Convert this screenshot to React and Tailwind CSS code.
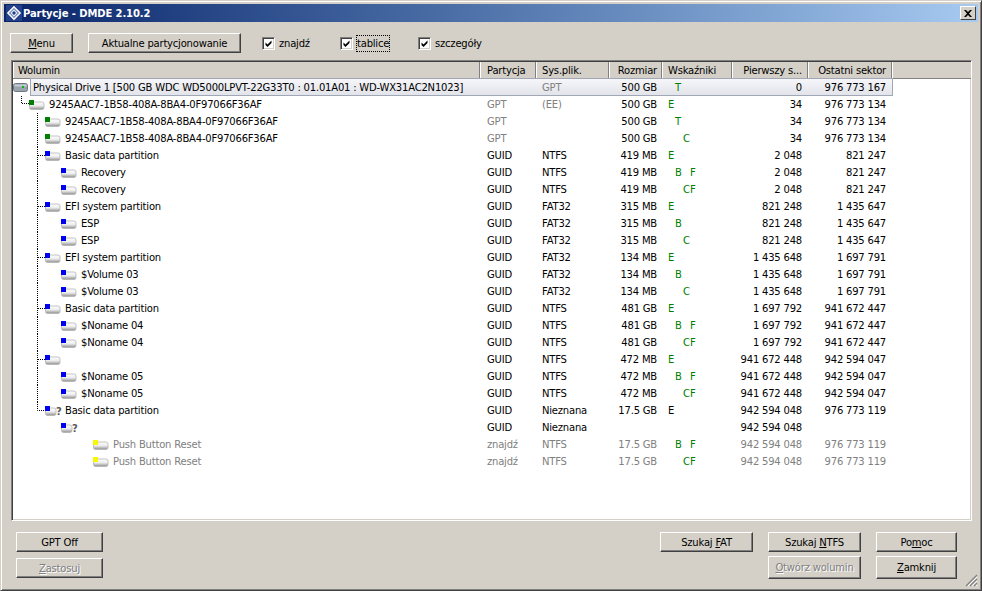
import React from "react";

const rows = [
  { d: 0, name: "Physical Drive 1 [500 GB WDC WD5000LPVT-22G33T0 : 01.01A01 : WD-WX31AC2N1023]", p: "", fs: "GPT", size: "500 GB", f: " T", a: "0", b: "976 773 167", c: "drive", sel: true, fsGray: true },
  { d: 1, name: "9245AAC7-1B58-408A-8BA4-0F97066F36AF", p: "GPT", fs: "(EE)", size: "500 GB", f: "E", a: "34", b: "976 773 134", c: "#008000", gray: true, conn: "top" },
  { d: 2, name: "9245AAC7-1B58-408A-8BA4-0F97066F36AF", p: "GPT", fs: "", size: "500 GB", f: " T", a: "34", b: "976 773 134", c: "#008000", gray: true, v: true },
  { d: 2, name: "9245AAC7-1B58-408A-8BA4-0F97066F36AF", p: "GPT", fs: "", size: "500 GB", f: "  C", a: "34", b: "976 773 134", c: "#008000", gray: true, v: true },
];
function group(name, fs, size, a, b, sub1, sub2, f1, f2) {
  return [
    { d: 2, name, p: "GUID", fs, size, f: "E", a, b, c: "#0000f0", conn: "mid" },
    { d: 3, name: sub1, p: "GUID", fs, size, f: f1, a, b, c: "#0000f0", v: true },
    { d: 3, name: sub2, p: "GUID", fs, size, f: f2, a, b, c: "#0000f0", v: true },
  ];
}
rows.push(...group("Basic data partition", "NTFS", "419 MB", "2 048", "821 247", "Recovery", "Recovery", " B F", "  CF"));
rows.push(...group("EFI system partition", "FAT32", "315 MB", "821 248", "1 435 647", "ESP", "ESP", " B", "  C"));
rows.push(...group("EFI system partition", "FAT32", "134 MB", "1 435 648", "1 697 791", "$Volume 03", "$Volume 03", " B", "  C"));
rows.push(...group("Basic data partition", "NTFS", "481 GB", "1 697 792", "941 672 447", "$Noname 04", "$Noname 04", " B F", "  CF"));
rows.push(...group("", "NTFS", "472 MB", "941 672 448", "942 594 047", "$Noname 05", "$Noname 05", " B F", "  CF"));
rows.push(
  { d: 2, name: "Basic data partition", p: "GUID", fs: "Nieznana", size: "17.5 GB", f: "E", fBlack: true, a: "942 594 048", b: "976 773 119", c: "#0000f0", conn: "end", q: true },
  { d: 3, name: "", p: "GUID", fs: "Nieznana", size: "", f: "", a: "942 594 048", b: "", c: "#0000f0", q: true },
  { d: 5, name: "Push Button Reset", p: "znajdź", fs: "NTFS", size: "17.5 GB", f: " B F", a: "942 594 048", b: "976 773 119", c: "#f8f800", dim: true },
  { d: 5, name: "Push Button Reset", p: "znajdź", fs: "NTFS", size: "17.5 GB", f: "  CF", a: "942 594 048", b: "976 773 119", c: "#f8f800", dim: true }
);

function DiskIcon({ color, q, id }) {
  return (
    <svg width="22" height="12" viewBox="0 0 22 12" className="shrink-0">
      <defs>
        <linearGradient id={id} x1="0" y1="0" x2="0" y2="1">
          <stop offset="0" stopColor="#ffffff" />
          <stop offset="0.5" stopColor="#ececec" />
          <stop offset="1" stopColor="#8e8e8e" />
        </linearGradient>
      </defs>
      <rect x="0.5" y="3" width={q ? 10.5 : 14.5} height="7.5" rx="2" fill={`url(#${id})`} stroke="#b4b4b4" strokeWidth="0.8" />
      <rect x="0" y="1" width="5" height="5" fill={color} />
      {q && <text x="11" y="10" fontSize="10" fontWeight="700" fill="#5a5a5a" fontFamily="DejaVu Sans">?</text>}
    </svg>
  );
}

function DriveIcon() {
  return (
    <svg width="16" height="9" viewBox="0 0 16 9" className="shrink-0">
      <rect x="0.5" y="0.5" width="14" height="8" rx="2" fill="#9aa4ae" stroke="#6f7780" />
      <rect x="1.5" y="1.5" width="12" height="2" fill="#c4ccd4" />
      <rect x="9" y="3" width="2" height="2" fill="#12b012" />
    </svg>
  );
}

function Connector({ kind }) {
  const paths = {
    top: "M8.5 0V7.5H16",
    mid: "M24.5 0V17M25 8.5H32",
    end: "M24.5 0V8.5H32",
    v: "M24.5 0V17",
  };
  return (
    <svg width="40" height="17" className="absolute left-0 top-0">
      <path d={paths[kind]} stroke="#000" strokeDasharray="1 1" fill="none" />
    </svg>
  );
}

function Flags({ f, black }) {
  const has = (ch) => f.includes(ch);
  return (
    <div className={`w-[70px] pl-[5px] flex ${black ? "text-black" : "text-[#008000]"}`}>
      <span className="w-[7px]">{has("E") ? "E" : ""}</span>
      <span className="w-[8px]">{has("T") ? "T" : has("B") ? "B" : ""}</span>
      <span className="w-[7px]">{has("C") ? "C" : ""}</span>
      <span className="w-[7px]">{has("F") ? "F" : ""}</span>
    </div>
  );
}

function Row({ r, i }) {
  const muted = r.gray || r.dim;
  const pCol = muted ? "text-[#808080]" : "text-black";
  const dataCol = r.dim ? "text-[#808080]" : "text-black";
  const fsCol = r.gray || r.dim || r.fsGray ? "text-[#808080]" : "text-black";
  const indent = { 0: 0, 1: 16, 2: 32, 3: 48, 5: 80 }[r.d];
  return (
    <div className="flex h-[17px] items-center leading-[17px] relative">
      {r.sel && (
        <div className="absolute left-[17px] w-[863px] top-[-1px] h-[18px] border border-[#a0a8b8] bg-gradient-to-b from-[#f6f6fa] to-[#e2e4ea]" />
      )}
      <div className="relative w-[468px] h-[17px] flex items-center whitespace-nowrap" style={{ paddingLeft: indent }}>
        {r.conn && <Connector kind={r.conn} />}
        {r.v && <Connector kind="v" />}
        {r.c === "drive" ? (
          <>
            <DriveIcon />
            <span className="relative ml-[4px] text-black">{r.name}</span>
          </>
        ) : (
          <>
            <DiskIcon color={r.c} q={r.q} id={`g${i}`} />
            <span className={`ml-[-2px] ${r.dim ? "text-[#808080]" : "text-black"}`}>{r.name}</span>
          </>
        )}
      </div>
      <div className={`relative w-[56px] pl-[6px] ${pCol}`}>{r.p}</div>
      <div className={`relative w-[73px] pl-[5px] ${fsCol}`}>{r.fs}</div>
      <div className={`relative w-[53px] pr-[6px] text-right ${dataCol}`}>{r.size}</div>
      <div className="relative"><Flags f={r.f} black={r.fBlack} /></div>
      <div className={`relative w-[76px] pr-[7px] text-right ${dataCol}`}>{r.a}</div>
      <div className={`relative w-[84px] pr-[7px] text-right ${dataCol}`}>{r.b}</div>
    </div>
  );
}

function Btn({ children, disabled, className = "" }) {
  return (
    <button
      className={`h-full flex items-center justify-center bg-[#d4d0c8] border border-t-white border-l-white border-r-[#404040] border-b-[#404040] shadow-[inset_-1px_-1px_0_#808080] ${disabled ? "text-[#808080] [text-shadow:1px_1px_0_#fff]" : "text-black"} ${className}`}
    >
      {children}
    </button>
  );
}

function Check({ label, focus, className = "" }) {
  return (
    <label className={`flex items-center gap-[4px] ${className}`}>
      <span className="w-[13px] h-[13px] bg-white border border-t-[#808080] border-l-[#808080] border-r-white border-b-white shadow-[inset_1px_1px_0_#404040,inset_-1px_-1px_0_#d4d0c8] flex items-center justify-center">
        <svg width="9" height="9" viewBox="0 0 9 9"><path d="M1.5 3.5L3.5 5.5L7.5 1.5V4L3.5 8L1.5 6z" fill="#000" /></svg>
      </span>
      <span className={focus ? "outline-1 outline-dotted outline-black" : ""}>{label}</span>
    </label>
  );
}

function Head({ w, right, children, pad }) {
  return (
    <div
      className={`h-[16px] shrink-0 flex items-center border-r border-r-[#808080] border-l border-l-white ${right ? "justify-end" : ""}`}
      style={{ width: w, paddingLeft: right ? 0 : pad, paddingRight: right ? pad : 0 }}
    >
      {children}
    </div>
  );
}

export default function App() {
  return (
    <div className="w-[982px] h-[591px] bg-[#d4d0c8] flex flex-col text-[10px] tracking-[-0.2px] overflow-hidden [font-family:'DejaVu_Sans',sans-serif] border-t border-l border-t-[#d4d0c8] border-l-[#d4d0c8] border-r border-b border-r-[#404040] border-b-[#404040] shadow-[inset_1px_1px_0_#fff,inset_-1px_-1px_0_#808080] p-[3px] relative">
      <div className="h-[18px] flex items-center justify-between pl-[2px] pr-[2px] bg-gradient-to-r from-[#0a246a] to-[#a6caf0] shrink-0">
        <div className="flex items-center gap-[1px]">
          <svg width="16" height="16" viewBox="0 0 16 16">
            <rect x="0" y="0" width="16" height="16" fill="#24408a" />
            <path d="M8 2L14 8 8 14 2 8z" fill="none" stroke="#fff" strokeWidth="1.6" />
            <path d="M8 5L11 8 8 11 5 8z" fill="none" stroke="#dfe6f5" strokeWidth="1.4" />
          </svg>
          <span className="text-white font-bold text-[10px] tracking-[-0.1px]">Partycje - DMDE 2.10.2</span>
        </div>
        <button className="w-[16px] h-[14px] flex items-center justify-center bg-[#d4d0c8] border border-t-white border-l-white border-r-[#404040] border-b-[#404040]">
          <svg width="8" height="7" viewBox="0 0 8 7"><path d="M0 0l2 0 2 2 2-2 2 0-3 3.5 3 3.5-2 0-2-2-2 2-2 0 3-3.5z" fill="#000" /></svg>
        </button>
      </div>

      <div className="h-[20px] mt-[11px] ml-[6px] flex items-center shrink-0">
        <Btn className="w-[63px]"><span><u>M</u>enu</span></Btn>
        <Btn className="w-[153px] ml-[15px]">Aktualne partycjonowanie</Btn>
        <Check label="znajdź" className="ml-[21px] w-[78px]" />
        <Check label="tablice" focus className="w-[78px]" />
        <Check label="szczegóły" />
      </div>

      <div className="mt-[7px] ml-[7px] w-[961px] h-[461px] bg-white border border-t-[#808080] border-l-[#808080] border-r-white border-b-white shadow-[inset_1px_1px_0_#404040,inset_-1px_-1px_0_#d4d0c8] pt-[1px] pl-[1px] shrink-0 overflow-hidden">
        <div className="flex h-[16px] bg-[#d4d0c8] border-b border-b-[#808080] box-content">
          <Head w={467} pad={4}>Wolumin</Head>
          <Head w={56} pad={6}>Partycja</Head>
          <Head w={73} pad={5}>Sys.plik.</Head>
          <Head w={53} pad={4} right>Rozmiar</Head>
          <Head w={70} pad={5}>Wskaźniki</Head>
          <Head w={76} pad={5} right>Pierwszy s...</Head>
          <Head w={84} pad={5} right>Ostatni sektor</Head>
          <div className="flex-1 border-l border-l-white" />
        </div>
        <div>
          {rows.map((r, i) => <Row key={i} r={r} i={i} />)}
        </div>
      </div>

      <div className="flex mt-[11px] ml-[12px] mr-[21px] flex-1 min-h-0 relative">
        <div className="flex flex-col w-[87px] gap-[6px]">
          <div className="h-[20px]"><Btn className="w-full">GPT Off</Btn></div>
          <div className="h-[20px]"><Btn disabled className="w-full"><span><u>Z</u>astosuj</span></Btn></div>
        </div>
        <div className="ml-auto grid grid-cols-[93px_93px_81px] gap-x-[15px] grid-rows-[20px_23px] gap-y-[4px]">
          <Btn><span>Szukaj <u>F</u>AT</span></Btn>
          <Btn><span>Szukaj <u>N</u>TFS</span></Btn>
          <Btn><span>Po<u>m</u>oc</span></Btn>
          <div />
          <Btn disabled><span><u>O</u>twórz wolumin</span></Btn>
          <Btn><span><u>Z</u>amknij</span></Btn>
        </div>
      </div>

      <svg width="13" height="13" viewBox="0 0 13 13" className="absolute right-[3px] bottom-[3px]">
        <path d="M12 1L1 12M12 5L5 12M12 9L9 12" stroke="#808080" strokeWidth="1.2" />
        <path d="M12 3L3 12M12 7L7 12M12 11L11 12" stroke="#fff" />
      </svg>
    </div>
  );
}
